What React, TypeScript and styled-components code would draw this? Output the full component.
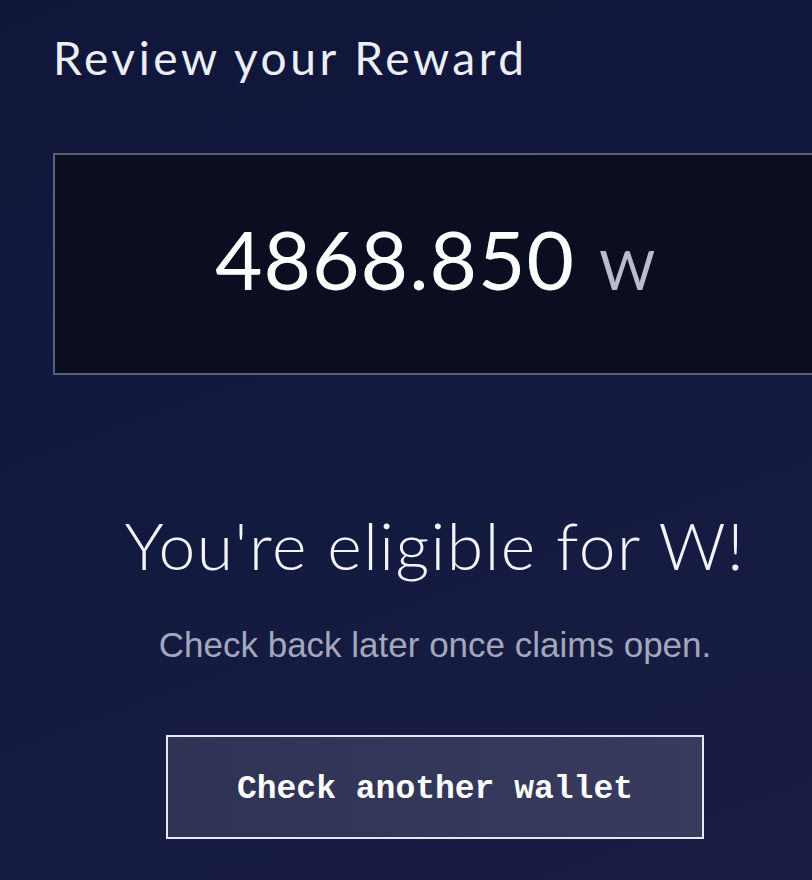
import React from 'react'
import styled, { createGlobalStyle } from 'styled-components'

const GlobalStyle = createGlobalStyle`
  html, body {
    margin: 0;
    padding: 0;
    height: 100%;
    overflow: hidden;
  }
  body {
    background: linear-gradient(160deg, #10163a 0%, #131a40 55%, #1a1d44 100%);
    font-family: "Liberation Sans", Arial, sans-serif;
    color: #eceef5;
  }
`

export default function App(): React.ReactElement {
  return (
    <>
      <GlobalStyle />
      <Page>
        <Title>Review your Reward</Title>
        <AmountBox>
          <Amount>4868.850</Amount>
          <Unit>W</Unit>
        </AmountBox>
        <Result>
          <Heading>You're eligible for W!</Heading>
          <Note>Check back later once claims open.</Note>
          <WalletButton type="button">Check another wallet</WalletButton>
        </Result>
      </Page>
    </>
  )
}

const Page = styled.main`
  width: 764px;
  padding: 28px 0 0 53px;
  display: flex;
  flex-direction: column;
`
const Title = styled.h1`
  margin: 0;
  font-family: "Lato", "Liberation Sans", sans-serif;
  font-weight: 400;
  font-size: 46px;
  line-height: 60px;
  color: #eceef5;
  letter-spacing: 3.6px;
`
const AmountBox = styled.div`
  margin-top: 65px;
  height: 222px;
  box-sizing: border-box;
  border: 2px solid #5b6178;
  background: #0b0e20;
  display: flex;
  align-items: baseline;
  justify-content: center;
  gap: 24px;
  padding-top: 53px;
`
const Amount = styled.span`
  font-family: "Lato", "Liberation Sans", sans-serif;
  font-size: 82px;
  line-height: 100px;
  color: #ffffff;
  letter-spacing: 1px;
`
const Unit = styled.span`
  font-family: "Lato", "Liberation Sans", sans-serif;
  font-size: 54px;
  color: #b9bccb;
`
const Result = styled.section`
  margin-top: 132px;
  display: flex;
  flex-direction: column;
  align-items: center;
`
const Heading = styled.h2`
  margin: 0;
  font-family: "Lato", "Liberation Sans", sans-serif;
  font-weight: 300;
  font-size: 66px;
  line-height: 76px;
  color: #f3f4f8;
  letter-spacing: 1.5px;
`
const Note = styled.p`
  margin: 42px 0 0;
  font-size: 35px;
  line-height: 40px;
  color: #a3a8bc;
`
const WalletButton = styled.button`
  margin-top: 70px;
  width: 538px;
  height: 104px;
  padding: 4px 0 0;
  border: 2px solid #e6e8f0;
  background: linear-gradient(90deg, #2e3354 0%, #383b5e 100%);
  color: #ffffff;
  font-family: "Liberation Mono", "Courier New", monospace;
  font-weight: 700;
  font-size: 33px;
  cursor: pointer;
`
